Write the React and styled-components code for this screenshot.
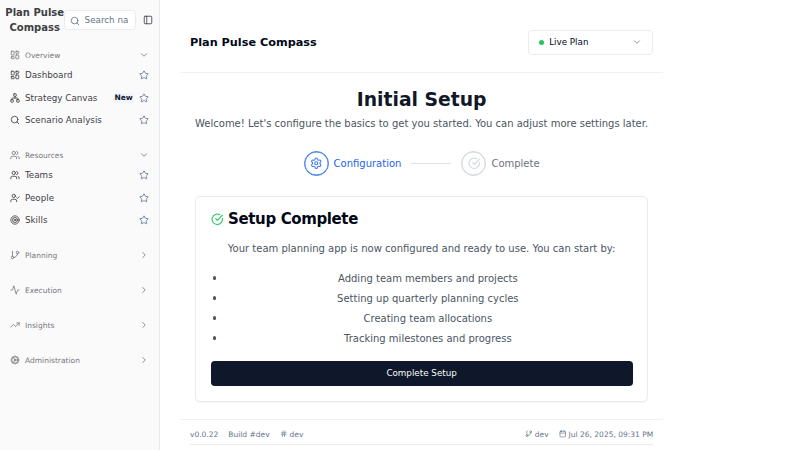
import React from "react";
import styled, { createGlobalStyle, css } from "styled-components";
import {
  Activity, Calendar, ChevronDown, ChevronRight, CircleCheckBig, Cog, GitBranch, Hash,
  LayoutDashboard, Network, PanelLeft, Search, Settings, Star, Target,
  TrendingUp, UserCheck, Users,
} from "lucide-react";

const GlobalStyle = createGlobalStyle`
  *, *::before, *::after { box-sizing: border-box; }
  body { margin: 0; background: #fff; font-family: "DejaVu Sans", sans-serif; color: #020817; }
  h1, h2, h3, p, ul { margin: 0; padding: 0; }
  button { font: inherit; border: 0; background: none; padding: 0; color: inherit; }
  svg { display: block; flex-shrink: 0; }
`;

const Layout = styled.div`
  display: flex;
  height: 450px;
  overflow: hidden;
`;

const Sidebar = styled.aside`
  width: 160px;
  flex-shrink: 0;
  background: #fafafa;
  border-right: 1px solid #e6e9ef;
  color: #3f3f46;
`;

const SidebarHeader = styled.div`
  display: flex;
  align-items: center;
  height: 40px;
  padding: 5px 6.5px 5px 5px;
`;

const Brand = styled.h2`
  width: 59.4px;
  flex-shrink: 0;
  font-size: 10px;
  line-height: 15px;
  font-weight: 700;
  text-align: center;
`;

const SearchBox = styled.div`
  display: flex;
  align-items: center;
  gap: 5px;
  width: 72px;
  height: 20px;
  padding-left: 4.2px;
  border: 1px solid #e8ecf1;
  border-radius: 3.75px;
  background: #fff;
  color: #64748b;
  font-size: 8.75px;
  white-space: nowrap;
  svg { margin-top: 2px; }
`;

const Toggle = styled.button`
  margin-left: auto;
`;

const Group = styled.div`
  padding: 5px;
`;

const rowLayout = css`
  display: flex;
  align-items: center;
  gap: 5px;
  padding: 0 5px;
  white-space: nowrap;
`;

const GroupLabel = styled.div`
  ${rowLayout}
  height: 20px;
  font-size: 7.5px;
  color: #78787d;
`;

const Item = styled.div`
  ${rowLayout}
  height: 20px;
  margin-bottom: 2.5px;
  font-size: 8.75px;
  &:last-child { margin-bottom: 0; }
`;

const Groups = styled.nav`
  display: flex;
  flex-direction: column;
  gap: 5px;
`;

const Grow = styled.span`
  flex: 1;
`;

const NewBadge = styled.span`
  padding: 0 1.25px;
  border-radius: 2.5px;
  background: #f1f5f9;
  color: #0f172a;
  font-size: 7.5px;
  line-height: 10px;
  font-weight: 700;
`;

const StarIcon = styled(Star)`
  color: #64748b;
`;

const Main = styled.main`
  width: 483.2px;
  margin-left: 20px;
  flex-shrink: 0;
`;

const TopBar = styled.header`
  display: flex;
  align-items: center;
  justify-content: space-between;
  height: 73px;
  padding: 12px 10px 0;
  border-bottom: 1px solid #eef1f5;
`;

const TopTitle = styled.h1`
  font-size: 11.25px;
  font-weight: 700;
`;

const PlanSelect = styled.button`
  display: flex;
  align-items: center;
  gap: 5px;
  width: 125px;
  height: 25px;
  padding: 0 10px;
  border: 1px solid #e8ecf1;
  border-radius: 3.75px;
  font-size: 8.75px;
`;

const Dot = styled.span`
  width: 5px;
  height: 5px;
  border-radius: 50%;
  background: #22c55e;
`;

const Setup = styled.section`
  padding: 15.5px 15px 17px;
  text-align: center;
`;

const SetupTitle = styled.h2`
  font-size: 18.75px;
  line-height: 22.5px;
  color: #111827;
`;

const Intro = styled.p`
  margin-top: 4.5px;
  font-size: 10px;
  line-height: 15px;
  color: #4b5563;
  white-space: nowrap;
`;

const Steps = styled.div`
  display: flex;
  align-items: center;
  justify-content: center;
  gap: 10px;
  margin: 20px 0;
`;

const Step = styled.div`
  display: flex;
  align-items: center;
  gap: 5px;
  font-size: 10px;
  color: ${(p) => (p.$active ? "#2563eb" : "#6b7280")};
`;

const StepCircle = styled.span`
  display: grid;
  place-items: center;
  width: 25px;
  height: 25px;
  border-radius: 50%;
  border: 1px solid;
  box-shadow: inset 0 0 0 0.4px;
  color: ${(p) => (p.$active ? "#3b7bea" : "#d1d5db")};
`;

const StepLine = styled.span`
  width: 40px;
  height: 1px;
  background: #dde0e4;
`;

const Card = styled.div`
  height: 206px;
  padding: 15px 14.6px 14.6px;
  border: 1px solid #e8ecf1;
  border-radius: 5px;
  box-shadow: 0 0.6px 1.2px rgba(0, 0, 0, 0.05);
`;

const CardTitle = styled.h3`
  display: flex;
  align-items: center;
  gap: 5px;
  font-size: 15px;
  line-height: 15px;
  letter-spacing: -0.375px;
  svg { color: #22c55e; }
`;

const CardText = styled.p`
  margin-top: 14px;
  font-size: 10px;
  line-height: 15px;
  color: #4b5563;
`;

const Bullets = styled.ul`
  margin: 12.5px 0;
  font-size: 10px;
  line-height: 15px;
  color: #4b5563;
  list-style: none;
`;

const Bullet = styled.li`
  display: flex;
  align-items: center;
  justify-content: center;
  padding: 2.5px 0;

  &::before {
    content: "";
    width: 3.2px;
    height: 3.2px;
    margin: 0 7.3px 0 2px;
    border-radius: 50%;
    background: currentColor;
  }
`;

const BulletText = styled.span`
  flex: 1;
`;

const PrimaryButton = styled.button`
  display: block;
  width: 100%;
  height: 25px;
  border-radius: 3.75px;
  background: #0f172a;
  color: #f8fafc;
  font-size: 8.75px;
`;

const Footer = styled.footer`
  padding: 0 10px;
  border-top: 1px solid #eef1f5;
`;

const FooterRow = styled.div`
  display: flex;
  align-items: center;
  gap: 10px;
  height: 25px;
  padding-top: 5px;
  border-bottom: 1px solid #e8ecf1;
  font-size: 7.5px;
  color: #64748b;
`;

const Meta = styled.span`
  display: flex;
  align-items: center;
  gap: 2.5px;
  white-space: nowrap;
`;

const groups = [
  {
    label: "Overview", icon: LayoutDashboard,
    items: [
      { label: "Dashboard", icon: LayoutDashboard },
      { label: "Strategy Canvas", icon: Network, isNew: true },
      { label: "Scenario Analysis", icon: Search },
    ],
  },
  {
    label: "Resources", icon: Users,
    items: [
      { label: "Teams", icon: Users },
      { label: "People", icon: UserCheck },
      { label: "Skills", icon: Target },
    ],
  },
  { label: "Planning", icon: GitBranch },
  { label: "Execution", icon: Activity },
  { label: "Insights", icon: TrendingUp },
  { label: "Administration", icon: Cog },
];

const tasks = [
  "Adding team members and projects",
  "Setting up quarterly planning cycles",
  "Creating team allocations",
  "Tracking milestones and progress",
];

function NavGroup({ label, icon: Icon, items }) {
  const Chevron = items ? ChevronDown : ChevronRight;
  return (
    <Group>
      <GroupLabel>
        <Icon size={10} />
        {label}
        <Grow />
        <Chevron size={10} />
      </GroupLabel>
      {items?.map(({ label: name, icon: ItemIcon, isNew }) => (
        <Item key={name}>
          <ItemIcon size={10} />
          {name}
          <Grow />
          {isNew && <NewBadge>New</NewBadge>}
          <StarIcon size={10} />
        </Item>
      ))}
    </Group>
  );
}

export default function App() {
  return (
    <>
      <GlobalStyle />
      <Layout>
        <Sidebar>
          <SidebarHeader>
            <Brand>Plan Pulse Compass</Brand>
            <SearchBox><Search size={10} />Search na</SearchBox>
            <Toggle aria-label="Toggle sidebar"><PanelLeft size={10} /></Toggle>
          </SidebarHeader>
          <Groups>
            {groups.map((g) => <NavGroup key={g.label} {...g} />)}
          </Groups>
        </Sidebar>
        <Main>
          <TopBar>
            <TopTitle>Plan Pulse Compass</TopTitle>
            <PlanSelect>
              <Dot />Live Plan<Grow />
              <ChevronDown size={10} color="#80848c" />
            </PlanSelect>
          </TopBar>
          <Setup>
            <SetupTitle>Initial Setup</SetupTitle>
            <Intro>Welcome! Let's configure the basics to get you started. You can adjust more settings later.</Intro>
            <Steps>
              <Step $active>
                <StepCircle $active><Settings size={12.5} /></StepCircle>
                Configuration
              </Step>
              <StepLine />
              <Step>
                <StepCircle><CircleCheckBig size={12.5} /></StepCircle>
                Complete
              </Step>
            </Steps>
            <Card>
              <CardTitle><CircleCheckBig size={12.5} />Setup Complete</CardTitle>
              <CardText>Your team planning app is now configured and ready to use. You can start by:</CardText>
              <Bullets>
                {tasks.map((t) => <Bullet key={t}><BulletText>{t}</BulletText></Bullet>)}
              </Bullets>
              <PrimaryButton>Complete Setup</PrimaryButton>
            </Card>
          </Setup>
          <Footer>
            <FooterRow>
              <Meta>v0.0.22</Meta>
              <Meta>Build #dev</Meta>
              <Meta><Hash size={7.5} />dev</Meta>
              <Grow />
              <Meta><GitBranch size={7.5} />dev</Meta>
              <Meta><Calendar size={7.5} />Jul 26, 2025, 09:31 PM</Meta>
            </FooterRow>
          </Footer>
        </Main>
      </Layout>
    </>
  );
}
